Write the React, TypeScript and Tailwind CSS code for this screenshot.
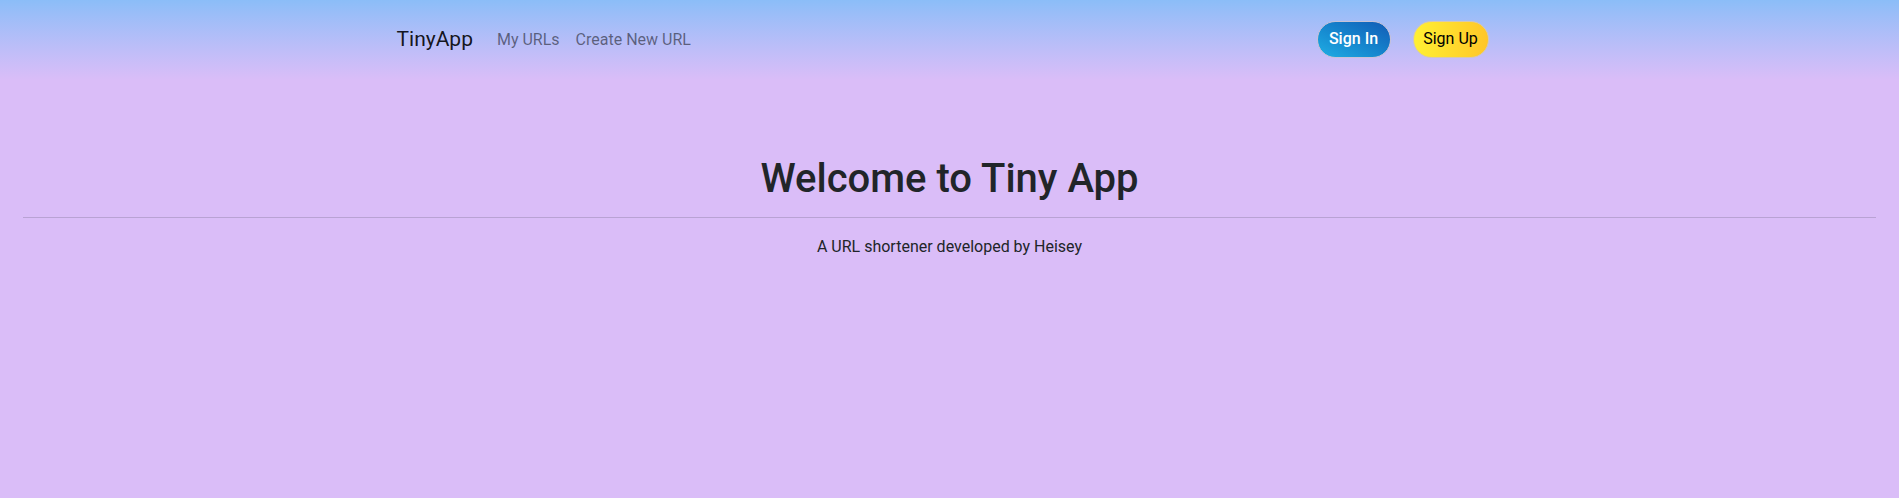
export default function App() {
  return (
    <div className="min-h-[498px] bg-[#dabdf8] font-['Roboto','Liberation_Sans',sans-serif] text-[#212529]">
      {/* Navbar */}
      <nav className="h-[80px] bg-gradient-to-b from-[#8bbdf8] to-[#dabdf8]">
        <div className="mx-auto flex h-full w-[1140px] items-center pl-[17px] pr-[15px]">
          <span className="mr-[24px] text-[21px] text-black/90">TinyApp</span>
          <a className="pr-[8px] text-[16px] text-black/50">My URLs</a>
          <a className="px-[8px] text-[16px] text-black/50">Create New URL</a>
          <div className="ml-auto mr-[16px] mb-[2px] flex items-center gap-[22px]">
            <button className="h-[37px] w-[74px] rounded-full border border-[#c7c2d6] bg-gradient-to-tr from-[#20aee4] to-[#135bb5] text-[16px] font-medium text-white">
              Sign In
            </button>
            <button className="h-[37px] w-[76px] rounded-full border border-[#d6c9b0] bg-gradient-to-r from-[#fff033] to-[#ffc628] text-[16px] font-normal text-black">
              Sign Up
            </button>
          </div>
        </div>
      </nav>

      {/* Header */}
      <header className="pt-[75px] text-center">
        <h1 className="text-[40px] font-medium leading-[1.2]">Welcome to Tiny App</h1>
        <hr className="mx-[23px] mt-[14px] border-t border-[#b9a2d4]" />
        <p className="mt-[17px] text-[16px]">A URL shortener developed by Heisey</p>
      </header>
    </div>
  );
}
